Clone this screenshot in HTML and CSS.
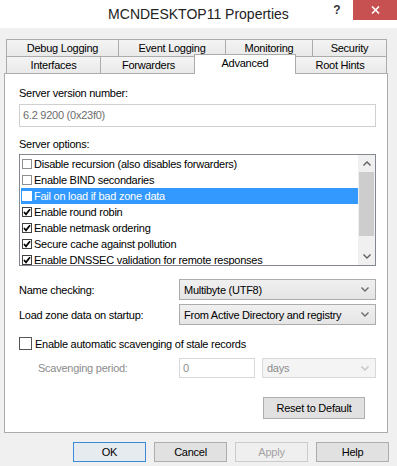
FILE: index.html
```html
<!DOCTYPE html>
<html>
<head>
<meta charset="utf-8">
<link rel="stylesheet" href="styles.css">
</head>
<body>
<div class="window">
  <header class="titlebar">
    <div></div>
    <div class="title">MCNDESKTOP11 Properties</div>
    <div class="controls">
      <span class="help">?</span>
      <span class="close"><svg width="9" height="8" viewBox="0 0 9 8"><path d="M1 0.5 L8 7.5 M8 0.5 L1 7.5" stroke="#fff" stroke-width="1.6" fill="none"/></svg></span>
    </div>
  </header>
  <div class="client">
    <div class="tabs">
      <div class="tabrow">
        <div class="tab t-debug">Debug Logging</div>
        <div class="tab t-event">Event Logging</div>
        <div class="tab t-mon">Monitoring</div>
        <div class="tab t-sec">Security</div>
      </div>
      <div class="tabrow">
        <div class="tab t-if">Interfaces</div>
        <div class="tab t-fwd">Forwarders</div>
        <div class="tab t-adv sel">Advanced</div>
        <div class="tab t-root">Root Hints</div>
      </div>
    </div>
    <div class="panel">
      <div class="lbl">Server version number:</div>
      <div class="textbox">6.2 9200 (0x23f0)</div>
      <div class="lbl opts">Server options:</div>
      <div class="listbox">
        <div class="items">
          <div class="item"><span class="cb"></span>Disable recursion (also disables forwarders)</div>
          <div class="item"><span class="cb"></span>Enable BIND secondaries</div>
          <div class="item sel"><span class="cb"></span>Fail on load if bad zone data</div>
          <div class="item"><span class="cb on"><svg width="8" height="8" viewBox="0 0 8 8"><path d="M1 4 L3 6.3 L7 1.2" stroke="#000" stroke-width="1.7" fill="none"/></svg></span>Enable round robin</div>
          <div class="item"><span class="cb on"><svg width="8" height="8" viewBox="0 0 8 8"><path d="M1 4 L3 6.3 L7 1.2" stroke="#000" stroke-width="1.7" fill="none"/></svg></span>Enable netmask ordering</div>
          <div class="item"><span class="cb on"><svg width="8" height="8" viewBox="0 0 8 8"><path d="M1 4 L3 6.3 L7 1.2" stroke="#000" stroke-width="1.7" fill="none"/></svg></span>Secure cache against pollution</div>
          <div class="item"><span class="cb on"><svg width="8" height="8" viewBox="0 0 8 8"><path d="M1 4 L3 6.3 L7 1.2" stroke="#000" stroke-width="1.7" fill="none"/></svg></span>Enable DNSSEC validation for remote responses</div>
        </div>
        <div class="scrollbar">
          <div class="arrow"><svg width="8" height="5" viewBox="0 0 8 5"><path d="M0.5 4.5 L4 1 L7.5 4.5" stroke="#606060" stroke-width="1.4" fill="none"/></svg></div>
          <div class="thumb"></div>
          <div class="track"></div>
          <div class="arrow"><svg width="8" height="5" viewBox="0 0 8 5"><path d="M0.5 0.5 L4 4 L7.5 0.5" stroke="#606060" stroke-width="1.4" fill="none"/></svg></div>
        </div>
      </div>
      <div class="field">
        <span class="fl">Name checking:</span>
        <div class="select"><span>Multibyte (UTF8)</span><svg width="8" height="5" viewBox="0 0 8 5"><path d="M0.5 0.5 L4 4 L7.5 0.5" stroke="#6a6a6a" stroke-width="1.4" fill="none"/></svg></div>
      </div>
      <div class="field field2">
        <span class="fl">Load zone data on startup:</span>
        <div class="select"><span>From Active Directory and registry</span><svg width="8" height="5" viewBox="0 0 8 5"><path d="M0.5 0.5 L4 4 L7.5 0.5" stroke="#6a6a6a" stroke-width="1.4" fill="none"/></svg></div>
      </div>
      <div class="chk"><span class="bigcb"></span>Enable automatic scavenging of stale records</div>
      <div class="scav">
        <span class="fl">Scavenging period:</span>
        <div class="num">0</div>
        <div class="days"><span>days</span><svg width="8" height="5" viewBox="0 0 8 5"><path d="M0.5 0.5 L4 4 L7.5 0.5" stroke="#c4c4c4" stroke-width="1.4" fill="none"/></svg></div>
      </div>
      <div class="reset-row"><div class="btn reset">Reset to Default</div></div>
    </div>
    <div class="buttons">
      <div class="btn ok">OK</div>
      <div class="btn">Cancel</div>
      <div class="btn apply">Apply</div>
      <div class="btn">Help</div>
    </div>
  </div>
</div>
</body>
</html>
```
FILE: styles.css
```css
* { box-sizing: border-box; }
body {
  margin: 0;
  width: 397px;
  height: 466px;
  overflow: hidden;
  background: #f0f0f0;
  font-family: "Liberation Sans", Arial, sans-serif;
  font-size: 11px;
  letter-spacing: -0.25px;
  color: #000;
}
.titlebar {
  height: 28px;
  background: #fff;
  display: grid;
  grid-template-columns: 1fr auto 1fr;
}
.title {
  font-size: 14px;
  line-height: 28px;
  letter-spacing: 0;
  color: #222;
}
.controls { justify-self: end; display: flex; }
.help {
  width: 28px;
  height: 20px;
  margin-right: 2px;
  text-align: center;
  font-weight: bold;
  font-size: 12px;
  line-height: 20px;
  letter-spacing: 0;
  color: #333;
}
.close {
  width: 44px;
  height: 20px;
  background: #c75050;
  display: flex;
  align-items: center;
  justify-content: center;
}
.client { padding: 11px 0 0 4px; }
.tabs { padding-left: 2px; }
.tabrow { display: flex; height: 17px; }
.tab {
  height: 17px;
  border: 1px solid #acacac;
  border-bottom: none;
  background: linear-gradient(#f4f4f4, #e9e9e9);
  text-align: center;
  line-height: 16px;
  margin-left: -1px;
  white-space: nowrap;
}
.tab:first-child { margin-left: 0; }
.t-debug { width: 113px; }
.t-event { width: 108px; }
.t-mon { width: 88px; }
.t-sec { width: 75px; }
.t-if { width: 95px; }
.t-fwd { width: 97px; }
.t-adv { width: 102px; }
.t-root { width: 94px; }
.tab.sel {
  background: #fff;
  height: 20px;
  margin-top: -2px;
  margin-left: -3px;
  line-height: 17px;
  position: relative;
  z-index: 1;
}
.tab.sel + .tab { margin-left: -3px; }
.panel {
  width: 384px;
  height: 360px;
  border: 1px solid #acacac;
  background: #fff;
  padding: 13px 11px 0 14px;
}
.lbl { line-height: 13px; }
.lbl.opts { margin-top: 11px; }
.textbox {
  margin-top: 4px;
  height: 23px;
  border: 1px solid #d0d0d0;
  color: #6d6d6d;
  padding-left: 3px;
  line-height: 21px;
}
.listbox {
  margin-top: 3px;
  height: 112px;
  border: 1px solid #828790;
  display: flex;
}
.items {
  flex: 1;
  padding: 1px 0 0 1px;
  overflow: hidden;
}
.item {
  height: 16px;
  display: flex;
  align-items: center;
  white-space: nowrap;
}
.item.sel { background: #3399ff; color: #fff; }
.cb {
  flex: none;
  width: 10px;
  height: 10px;
  border: 1px solid #8f8f8f;
  background: #fff;
  margin: 0 2px 0 1px;
  display: flex;
  align-items: center;
  justify-content: center;
}
.cb.on { border-color: #404040; }
.item.sel .cb { border-color: #fff; }
.scrollbar {
  flex: none;
  width: 17px;
  background: #f0f0f0;
  display: flex;
  flex-direction: column;
}
.arrow {
  height: 17px;
  display: flex;
  align-items: center;
  justify-content: center;
}
.thumb { height: 64px; background: #cdcdcd; margin: 0 1px; }
.track { flex: 1; }
.field { display: flex; align-items: center; margin-top: 13px; }
.field2 { margin-top: 4px; }
.fl { width: 160px; flex: none; }
.select {
  width: 197px;
  height: 21px;
  border: 1px solid #acacac;
  background: linear-gradient(#f0f0f0, #e5e5e5);
  display: flex;
  align-items: center;
  justify-content: space-between;
  padding: 0 6px 0 4px;
}
.chk {
  margin-top: 12px;
  height: 13px;
  display: flex;
  align-items: center;
}
.bigcb {
  width: 13px;
  height: 13px;
  border: 1px solid #555;
  background: #fff;
  margin-right: 3px;
}
.scav { margin-top: 8px; display: flex; align-items: center; }
.scav .fl { padding-left: 19px; color: #8c8c8c; }
.num {
  width: 76px;
  height: 20px;
  border: 1px solid #d9d9d9;
  padding-left: 3px;
  line-height: 18px;
  color: #8c8c8c;
}
.days {
  margin-left: 7px;
  width: 114px;
  height: 20px;
  border: 1px solid #d9d9d9;
  background: #f4f4f4;
  color: #8c8c8c;
  display: flex;
  align-items: center;
  justify-content: space-between;
  padding: 0 6px 0 4px;
}
.reset-row { display: flex; justify-content: flex-end; margin-top: 19px; }
.btn {
  height: 22px;
  border: 1px solid #adadad;
  background: #e1e1e1;
  text-align: center;
  line-height: 20px;
}
.reset { width: 102px; margin-right: 11px; }
.buttons {
  display: flex;
  justify-content: flex-end;
  gap: 8px;
  margin-top: 9px;
  padding-right: 8px;
}
.buttons .btn { width: 73px; height: 20px; line-height: 18px; }
.btn.ok { border-color: #3c8ad6; background: #e6ebf0; }
.btn.apply { color: #a3a3a3; border-color: #cbcbcb; background: #efefef; }
```
